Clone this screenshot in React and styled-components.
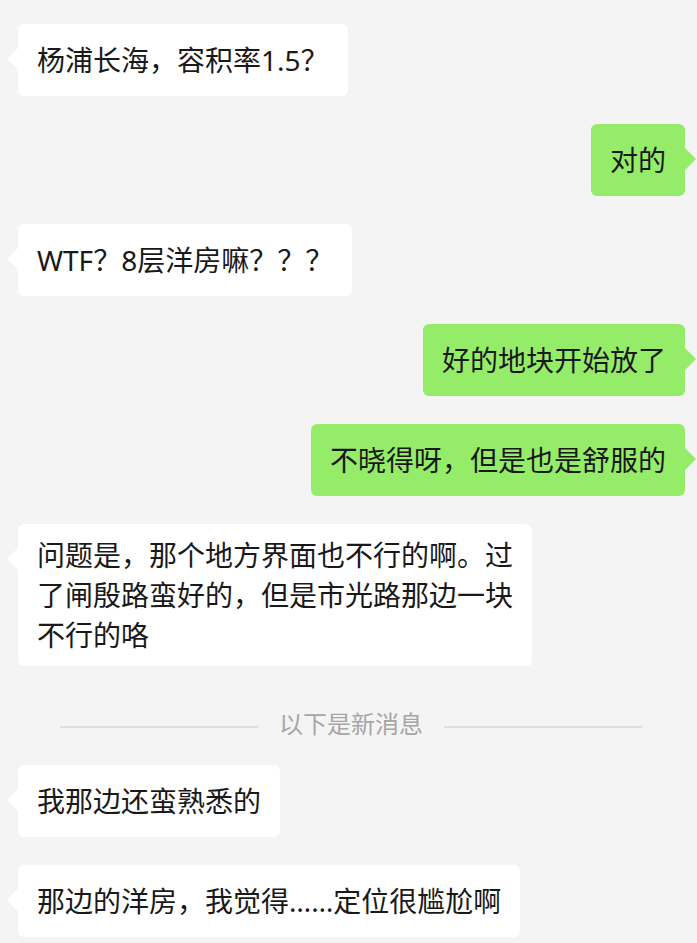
import React from "react";
import styled, { createGlobalStyle } from "styled-components";

const GlobalStyle = createGlobalStyle`
  html, body {
    margin: 0;
    padding: 0;
    background: #f4f4f4;
  }
  * {
    box-sizing: border-box;
  }
`;

const Chat = styled.div`
  display: flex;
  flex-direction: column;
  gap: 28px;
  width: 697px;
  padding: 24px 12px 0 18px;
  font-family: "Noto Sans", "Noto Sans CJK SC", sans-serif;
`;

const Row = styled.div`
  display: flex;
  justify-content: ${(props) => (props.mine ? "flex-end" : "flex-start")};
`;

const Bubble = styled.div`
  position: relative;
  display: flex;
  align-items: center;
  min-height: 72px;
  max-width: 514px;
  padding: 11px 19px;
  border-radius: 6px;
  background: ${(props) => (props.mine ? "#95ec69" : "#ffffff")};
  color: #191919;
  font-size: 28px;
  line-height: 40px;
  word-break: break-all;

  &::before {
    content: "";
    position: absolute;
    top: 24px;
    ${(props) => (props.mine ? "right: -11px;" : "left: -11px;")}
    width: 0;
    height: 0;
    border-top: 11px solid transparent;
    border-bottom: 11px solid transparent;
    ${(props) =>
      props.mine
        ? "border-left: 11px solid #95ec69;"
        : "border-right: 11px solid #ffffff;"}
  }
`;

const Divider = styled.div`
  display: flex;
  align-items: center;
  gap: 21px;
  height: 43px;
  padding-top: 17px;
  margin: 0 43px 0 42px;
`;

const DividerLine = styled.div`
  flex: 1;
  height: 2px;
  margin-top: 6px;
  background: #dfdfdf;
`;

const DividerText = styled.span`
  color: #a6a6a6;
  font-size: 24px;
  line-height: 24px;
`;

const messages = [
  { mine: false, text: "杨浦长海，容积率1.5？" },
  { mine: true, text: "对的" },
  { mine: false, text: "WTF？8层洋房嘛？？？" },
  { mine: true, text: "好的地块开始放了" },
  { mine: true, text: "不晓得呀，但是也是舒服的" },
  {
    mine: false,
    text: "问题是，那个地方界面也不行的啊。过了闸殷路蛮好的，但是市光路那边一块不行的咯",
  },
  { divider: "以下是新消息" },
  { mine: false, text: "我那边还蛮熟悉的" },
  { mine: false, text: "那边的洋房，我觉得……定位很尴尬啊" },
];

export default function App() {
  return (
    <>
      <GlobalStyle />
      <Chat lang="zh-CN">
        {messages.map((m, i) =>
          m.divider ? (
            <Divider key={i}>
              <DividerLine />
              <DividerText>{m.divider}</DividerText>
              <DividerLine />
            </Divider>
          ) : (
            <Row key={i} mine={m.mine}>
              <Bubble mine={m.mine}>{m.text}</Bubble>
            </Row>
          )
        )}
      </Chat>
    </>
  );
}
